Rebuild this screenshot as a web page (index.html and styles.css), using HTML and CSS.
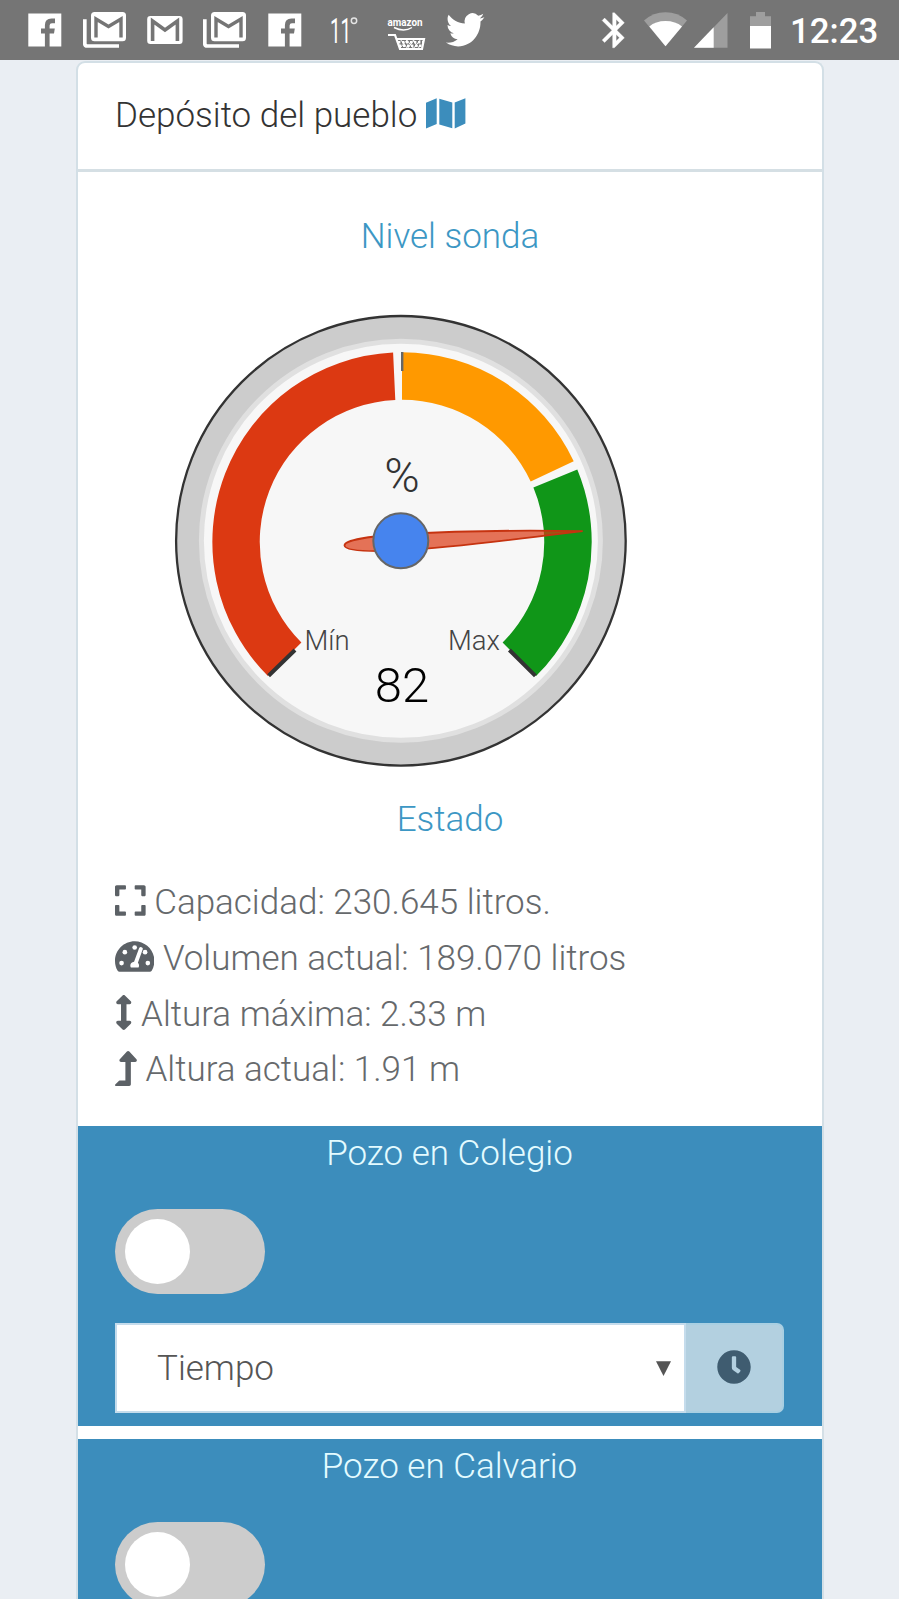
FILE: index.html
```html
<!DOCTYPE html>
<html lang="es">
<head>
<meta charset="utf-8">
<title>Depósito del pueblo</title>
<link rel="stylesheet" href="styles.css">
</head>
<body>
<svg class="defs" width="0" height="0">
  <defs>
    <symbol id="facebook" viewBox="28 0 34 60">
      <path fill="#fff" d="M28.3 13.6H61.3V46.4H49.6V33.4H54L54.8 28.6H49.6V25.5Q49.6 23.2 52 23.2H55V18.4H51.5Q44.9 18.4 44.9 25V28.6H41V33.4H44.9V46.4H28.3Z"/>
    </symbol>
    <symbol id="mails" viewBox="83 0 44 60">
      <rect x="91" y="12" width="35" height="29.3" rx="3.5" fill="#fff"/>
      <path d="M96 37.5V19L108.5 26.5L121 19V37.5" fill="none" stroke="#757575" stroke-width="3.4"/>
      <path d="M84.8 19.3V43.5Q84.8 46 87.3 46H119" fill="none" stroke="#fff" stroke-width="3.7"/>
    </symbol>
  </defs>
</svg>
<header class="status">
  <svg class="fb1" width="34" height="60"><use href="#facebook"/></svg>
  <svg class="mail1" width="44" height="60"><use href="#mails"/></svg>
  <svg class="mail2" width="37" height="60" viewBox="147 0 37 60">
    <rect x="147.2" y="16" width="35.4" height="28" rx="3.2" fill="#fff"/>
    <path d="M152.6 41V21L165 30L177.4 21V41" fill="none" stroke="#757575" stroke-width="3.6"/>
  </svg>
  <svg class="mail3" width="44" height="60"><use href="#mails"/></svg>
  <svg class="fb2" width="34" height="60"><use href="#facebook"/></svg>
  <svg class="temp" width="42" height="60" viewBox="322 0 42 60">
    <text transform="translate(330 43) scale(.54 1)" font-size="35" font-weight="400">11</text>
    <circle cx="354" cy="20.7" r="2.7" fill="none" stroke="#e4e4e4" stroke-width="1.5"/>
  </svg>
  <svg class="shop" width="40" height="60" viewBox="386 0 40 60">
    <text x="387.5" y="26" font-size="11" font-weight="700" textLength="35" lengthAdjust="spacingAndGlyphs">amazon</text>
    <path d="M394 27.5Q404 32.5 412 27.5" fill="none" stroke="#fff" stroke-width="1.4"/>
    <path d="M388 35H395L400 49H422L424 39H396.5" fill="none" stroke="#fff" stroke-width="2.2"/>
    <path d="M398 42.2H423M399 45.7H422" stroke="#fff" stroke-width="2.6" stroke-dasharray="2.4 1.6"/>
    <path d="M400 39L408 49M406 39L414 49M412 39L420 49M408 39L400 48M415 39L407 49M421 39L413 49" stroke="#fff" stroke-width="1"/>
  </svg>
  <svg class="bird" width="40" height="60" viewBox="445 0 40 60">
    <path transform="translate(446 9.4) scale(1.6 1.7)" fill="#fff" d="M23.953 4.57a10 10 0 01-2.825.775 4.958 4.958 0 002.163-2.723c-.951.555-2.005.959-3.127 1.184a4.92 4.92 0 00-8.384 4.482C7.69 8.095 4.067 6.13 1.64 3.162a4.822 4.822 0 00-.666 2.475c0 1.71.87 3.213 2.188 4.096a4.904 4.904 0 01-2.228-.616v.06a4.923 4.923 0 003.946 4.827 4.996 4.996 0 01-2.212.085 4.936 4.936 0 004.604 3.417 9.867 9.867 0 01-6.102 2.105c-.39 0-.779-.023-1.17-.067a13.995 13.995 0 007.557 2.209c9.053 0 13.998-7.496 13.998-13.985 0-.21 0-.42-.015-.63A9.935 9.935 0 0024 4.59z"/>
  </svg>
  <svg class="system" width="175" height="60" viewBox="600 0 175 60">
    <path transform="translate(593.4 9.3) scale(1.75)" fill="#fff" stroke="#fff" stroke-width=".2" d="M17.71 7.71L12 2h-1v7.59L6.41 5 5 6.41 10.59 12 5 17.59 6.41 19 11 14.41V22h1l5.71-5.71-4.3-4.29 4.3-4.29zM13 5.83l1.88 1.88L13 9.59V5.83zm1.88 10.46L13 18.17v-3.76l1.88 1.88z"/>
    <path fill="#9e9e9e" d="M644 20.5Q653 12.2 665.5 12.2T687 20.5L665.5 46.3Z"/>
    <path fill="#fff" d="M649.3 26.5Q655.5 21 665.5 21T682 26.5L665.5 46.3Z"/>
    <path fill="#9e9e9e" d="M694 47.8L727.5 13V47.8Z"/>
    <path fill="#fff" d="M694 47.8L713.7 27.2V47.8Z"/>
    <path fill="#9e9e9e" d="M750 27V16.2H756V12H765V16.2H771V27Z"/>
    <path fill="#fff" d="M750 26H771V48.5H750Z"/>
  </svg>
  <span class="clock">12:23</span>
</header>
<main class="card">
  <h1 class="card-title">Depósito del pueblo
    <svg class="map" width="40" height="31" viewBox="0 0 40 31"><path d="M0 4.8L10.7.2V26L0 30.6ZM13.3.8L26.3 4.6V30.3L13.3 26.5ZM28.7 4.6L39.4.2V25.6L28.7 30.6Z"/></svg>
  </h1>
  <h2 class="heading probe">Nivel sonda</h2>
  <svg class="gauge" width="744" height="530" viewBox="78 262 744 530">
    <circle cx="400.9" cy="540.8" r="224.8" fill="#ccc" stroke="#333" stroke-width="2.3"/>
    <circle cx="400.9" cy="540.8" r="199.5" fill="#f7f7f7" stroke="#e0e0e0" stroke-width="5"/>
    <path fill="#dc3912" d="M267.9 676.1A189.7 189.7 0 0 1 393.1 352.5L395.3 400A142.2 142.2 0 0 0 301.4 642.6Z"/>
    <path fill="#ff9900" d="M402 352.3A189.7 189.7 0 0 1 573.7 461.2L530.7 481.5A142.2 142.2 0 0 0 402 399.8Z"/>
    <path fill="#109618" d="M577.3 469.4A189.7 189.7 0 0 1 536.1 676.1L502.6 642.6A142.2 142.2 0 0 0 533.4 487.6Z"/>
    <path d="M268.6 675.8L295 650M535.4 675.8L509.4 650" stroke="#333" stroke-width="4"/>
    <path d="M402.2 352V371" stroke="#666" stroke-width="2.4"/>
    <text x="402" y="491.5" font-size="48" text-anchor="middle" fill="#333">%</text>
    <text x="304.5" y="650" font-size="27.5" fill="#444">Mín</text>
    <text x="500" y="650" font-size="27.5" text-anchor="end" fill="#444">Max</text>
    <text x="402" y="702" font-size="49" text-anchor="middle" fill="#000">82</text>
    <path d="M582.7 531.2C520 530 460 530.9 401 534C370 536.500 344.5 539.5 344.5 545.500C345 551.5 372 551.8 402 550.5C460 547 520 538.500 582.7 531.2Z" fill="#dc3912" fill-opacity=".7" stroke="#c63310" stroke-width="1.8"/>
    <circle cx="400.8" cy="540.8" r="27.5" fill="#4684ee" stroke="#666" stroke-width="2"/>
  </svg>
  <h2 class="heading">Estado</h2>
  <ul class="facts">
    <li><svg class="fa" style="width:.875em" viewBox="0 0 448 512"><path d="M0 180V56c0-13.3 10.7-24 24-24h124c6.600 0 12 5.400 12 12v40c0 6.600-5.400 12-12 12H64v84c0 6.600-5.400 12-12 12H12c-6.600 0-12-5.400-12-12zM288 44v40c0 6.600 5.400 12 12 12h84v84c0 6.600 5.400 12 12 12h40c6.600 0 12-5.400 12-12V56c0-13.300-10.700-24-24-24H300c-6.600 0-12 5.400-12 12zm148 276h-40c-6.600 0-12 5.400-12 12v84h-84c-6.600 0-12 5.400-12 12v40c0 6.600 5.400 12 12 12h124c13.300 0 24-10.700 24-24V332c0-6.600-5.400-12-12-12zM160 468v-40c0-6.600-5.400-12-12-12H64v-84c0-6.600-5.400-12-12-12H12c-6.600 0-12 5.400-12 12v124c0 13.300 10.700 24 24 24h124c6.600 0 12-5.400 12-12z"/></svg> Capacidad: 230.645 litros.</li>
    <li><svg class="fa" style="width:1.125em" viewBox="0 0 576 512"><path d="M288 32C128.940 32 0 160.940 0 320c0 52.800 14.250 102.260 39.060 144.800 5.610 9.620 16.300 15.200 27.440 15.200h443c11.140 0 21.830-5.580 27.440-15.200C561.750 422.260 576 372.800 576 320c0-159.060-128.940-288-288-288z"/><g fill="#fff"><circle cx="288" cy="124" r="34"/><circle cx="144" cy="192" r="34"/><circle cx="440" cy="192" r="34"/><circle cx="96" cy="352" r="34"/><circle cx="480" cy="352" r="34"/><path d="M352 136Q364 112 388 119T407 148L335 348Q352 365 352 388Q352 405 344 416H232Q224 403 224 386Q226 338 279 331Z"/></g></svg> Volumen actual: 189.070 litros</li>
    <li><svg class="fa" style="width:.5em" viewBox="0 0 256 512"><path d="M214.059 377.941H168V134.059h46.059c21.382 0 32.090-25.851 16.971-40.971L144.971 7.029c-9.373-9.373-24.568-9.373-33.941 0L24.971 93.088c-15.119 15.119-4.411 40.971 16.971 40.971H88v243.882H41.941c-21.382 0-32.090 25.851-16.971 40.971l86.059 86.059c9.373 9.373 24.568 9.373 33.941 0l86.059-86.059c15.120-15.119 4.412-40.971-16.970-40.971z"/></svg> Altura máxima: 2.33 m</li>
    <li><svg class="fa" style="width:.625em" viewBox="0 0 320 512"><path d="M313.553 119.669L209.587 7.666c-9.485-10.214-25.676-10.229-35.174 0L70.438 119.669C56.232 134.969 67.062 160 88.025 160H152v272H68.024a11.996 11.996 0 0 0-8.485 3.515l-56 56C-4.021 499.074 1.333 512 12.024 512H208c13.255 0 24-10.745 24-24V160h63.966c20.878 0 31.851-24.969 17.587-40.331z"/></svg> Altura actual: 1.91 m</li>
  </ul>
  <section class="well">
    <h3 class="well-title">Pozo en Colegio</h3>
    <div class="toggle"><span class="knob"></span></div>
    <div class="field">
      <div class="select"><span>Tiempo</span><svg width="15" height="15" viewBox="0 0 15 15"><path fill="#555" d="M0 .3H15L7.500 15Z"/></svg></div>
      <div class="addon"><svg width="34" height="34" viewBox="4 4 504 504"><path d="M256 8C119 8 8 119 8 256s111 248 248 248 248-111 248-248S393 8 256 8zm92.490 313l-20 25a16 16 0 0 1-22.490 2.500l-67-49.720a40 40 0 0 1-15-31.230V112a16 16 0 0 1 16-16h32a16 16 0 0 1 16 16v144l58 42.500a16 16 0 0 1 2.490 22.500z"/></svg></div>
    </div>
  </section>
  <section class="well">
    <h3 class="well-title">Pozo en Calvario</h3>
    <div class="toggle"><span class="knob"></span></div>
  </section>
</main>
</body>
</html>
```
FILE: styles.css
```css
* { box-sizing: border-box; }
html, body { height: 1599px; overflow: hidden; }
body {
  margin: 0;
  background: #eaeef3;
  font-family: Roboto, "Liberation Sans", sans-serif;
  font-weight: 300;
  font-size: 35px;
  line-height: 54px;
}
h1, h2, h3, ul { margin: 0; padding: 0; font-size: inherit; font-weight: 300; }
svg { display: block; flex: none; }
.defs { display: none; }
.status { display: flex; height: 60px; background: #757575; color: #fff; }
.status text { fill: #fff; }
.fb1 { margin-left: 28px; }
.mail1 { margin-left: 21px; }
.mail2 { margin-left: 20px; }
.mail3 { margin-left: 19px; }
.fb2 { margin-left: 21px; }
.temp { margin-left: 20px; }
.shop { margin-left: 22px; }
.bird { margin-left: 19px; }
.system { margin-left: 115px; }
.clock { margin-left: 15px; font-size: 34.8px; font-weight: 500; line-height: 62px; }
.card {
  width: 748px;
  height: 1538px;
  margin: 1px 0 0 76px;
  border: 2px solid #d3dfe6;
  border-bottom: 0;
  border-radius: 9px 9px 0 0;
  background: #fff;
  overflow: hidden;
}
.card-title {
  display: flex;
  gap: 9px;
  height: 109px;
  padding: 26px 37px 0;
  border-bottom: 3px solid #d5dfe4;
  color: #333;
}
.map { margin-top: 9px; fill: #3c8dbc; }
.heading { height: 54px; padding-top: 1px; text-align: center; color: #3c97c4; }
.probe { padding-top: 2px; margin-top: 36px; }
.facts { list-style: none; margin: 29px 0 28px; padding-left: 37px; color: #66696c; line-height: 55.8px; }
.facts li { height: 55.8px; white-space: nowrap; }
.fa { display: inline-block; height: 1em; vertical-align: -.125em; fill: #5c6166; }
.well { height: 300px; margin-bottom: 13px; padding: 0 38px 0 37px; background: #3c8dbc; color: #e4fbff; }
.well-title { height: 54px; padding-top: 1px; text-align: center; }
.toggle { width: 150px; height: 85px; margin-top: 29px; padding: 10px; border-radius: 43px; background: #ccc; }
.knob { display: block; width: 65px; height: 65px; border-radius: 50%; background: #fff; }
.field { display: flex; height: 90px; margin-top: 29px; }
.select {
  display: flex;
  flex: 1;
  align-items: center;
  justify-content: space-between;
  padding: 1px 13px 0 40px;
  border: 2px solid #c5dcec;
  background: #fff;
  color: #555;
}
.addon {
  display: flex;
  width: 98px;
  align-items: center;
  justify-content: center;
  border: 2px solid #a9cfe2;
  border-left: 0;
  border-radius: 0 7px 7px 0;
  background: #b3d0e0;
}
.addon svg { fill: #3f5c70; margin-bottom: 2px; }
```
